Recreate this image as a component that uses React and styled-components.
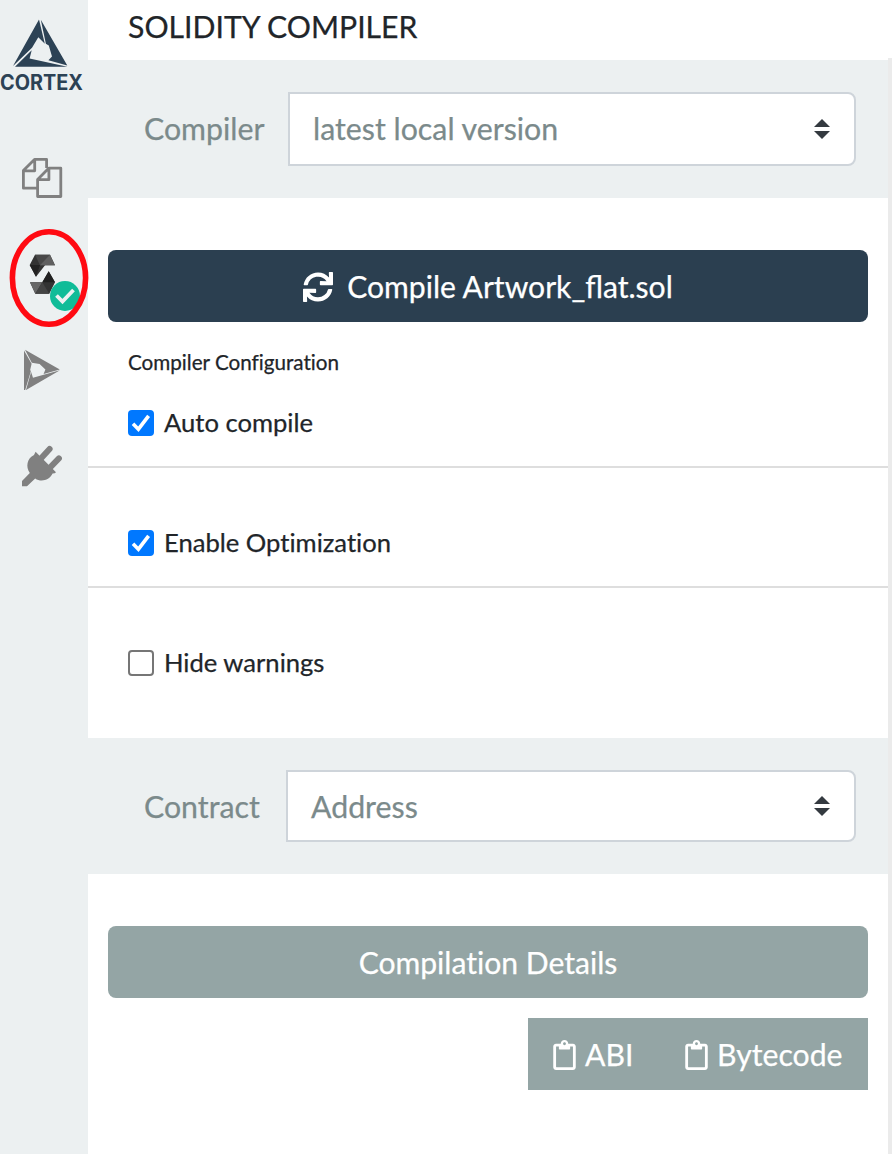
import React from "react";
import styled, { createGlobalStyle } from "styled-components";
import { FaSync, FaRegClipboard } from "react-icons/fa";

const GlobalStyle = createGlobalStyle`
  *, *::before, *::after { box-sizing: border-box; }
  body {
    margin: 0;
    background: #fff;
    color: #212529;
    font-family: Lato, "Liberation Sans", sans-serif;
    font-variant-ligatures: no-common-ligatures;
    -webkit-text-stroke: 0.25px currentColor;
    overflow: hidden;
  }
`;

const Shell = styled.div`
  display: flex;
  width: 892px;
  height: 1154px;
`;

const Sidebar = styled.nav`
  flex: none;
  width: 88px;
  background: #ecf0f1;
  display: flex;
  flex-direction: column;
  align-items: flex-start;

  svg { display: block; overflow: visible; }
`;

const Logo = styled.div`
  height: 157px;
  padding-top: 19px;
`;

const SideItem = styled.div`
  position: relative;
  width: 88px;
  height: ${(p) => p.$height}px;
  padding-left: ${(p) => p.$indent || 22}px;
  color: #808080;
`;

const Highlight = styled.svg`
  position: absolute;
  left: 9px;
  top: -25px;
  z-index: 2;
`;

const Badge = styled.span`
  position: absolute;
  left: 50px;
  top: 27px;
  width: 30px;
  height: 30px;
  border-radius: 50%;
  background: #0fbc98;
  display: grid;
  place-items: center;
`;

const Panel = styled.main`
  width: 800px;
  display: flex;
  flex-direction: column;
`;

const Edge = styled.div`
  width: 4px;
  margin-top: 58px;
  background: #ebebeb;
`;

const Title = styled.h1`
  margin: 0;
  height: 60px;
  padding: 8px 40px 0;
  font-size: 30.2px;
  line-height: 36px;
  font-weight: 400;
`;

const Field = styled.section`
  height: ${(p) => p.$height}px;
  padding: 32px 32px 32px 56px;
  display: flex;
  background: #ecf0f1;
  color: #7b8a8b;
  font-size: 30.3px;
  line-height: 36px;
`;

const FieldLabel = styled.label`
  flex: none;
  width: ${(p) => p.$width}px;
  display: flex;
  align-items: center;
  padding-bottom: ${(p) => p.$lift || 0}px;
`;

const SelectBox = styled.div`
  flex: 1;
  display: flex;
  align-items: center;
  justify-content: space-between;
  padding: 0 24px 0 ${(p) => p.$indent || 23}px;
  border: 2px solid #ced4da;
  border-radius: 0 8px 8px 0;
  background: #fff;
`;

const SelectValue = styled.span`
  padding-bottom: ${(p) => p.$lift || 0}px;
`;

const ActionArea = styled.div`
  padding: 52px 20px 0;
`;

const Button = styled.button`
  width: 100%;
  height: 72px;
  display: flex;
  align-items: center;
  justify-content: center;
  gap: 14px;
  padding: 0;
  border: 0;
  border-radius: 8px;
  background: ${(p) => (p.$primary ? "#2b3f50" : "#94a5a5")};
  color: #fff;
  font: 400 30.1px/36px Lato, "Liberation Sans", sans-serif;
  font-variant-ligatures: ${(p) => (p.$primary ? "normal" : "no-common-ligatures")};
  -webkit-text-stroke: inherit;

  svg { margin-top: 1px; }
`;

const Caption = styled.h2`
  margin: 0;
  height: 88px;
  padding: 27px 40px 0;
  font-size: 20.65px;
  line-height: 26px;
  font-weight: 400;
`;

const Option = styled.label`
  height: ${(p) => p.$height}px;
  display: flex;
  align-items: flex-start;
  gap: 10px;
  padding: 0 40px;
  font-size: 25.6px;
  line-height: 24px;
  border-bottom: ${(p) => (p.$divided ? "2px solid #dedede" : "0")};
  margin-bottom: ${(p) => (p.$divided ? 62 : 0)}px;
`;

const Check = styled.span`
  width: 26px;
  height: 26px;
  display: grid;
  place-items: center;
  border-radius: 4px;
  border: ${(p) => (p.$on ? "0" : "2px solid #767676")};
  background: ${(p) => (p.$on ? "#0078ff" : "#fff")};
`;

const CopyBar = styled.div`
  align-self: flex-end;
  display: flex;
  width: 340px;
  height: 72px;
  margin: 20px 20px 0 0;
  background: #94a5a5;
`;

const CopyButton = styled.button`
  width: ${(p) => p.$width}px;
  padding: 0 0 0 25px;
  display: flex;
  align-items: center;
  gap: 9px;
  border: 0;
  background: transparent;
  color: #fff;
  font: 400 30.2px/36px Lato, "Liberation Sans", sans-serif;
  -webkit-text-stroke: inherit;

  svg {
    width: 23px;
    height: 30px;
    margin-top: 1px;
  }
`;

function CortexLogo() {
  return (
    <svg width="88" height="76" viewBox="0 19 88 76">
      <g fill="#2c4255">
        <path d="M39 19.6 13 66 32 47.8 38.3 37.3 44.8 43.8Z" />
        <path d="M40.8 19.8 67.3 65.6 48.4 60.2 52 56.6 48.8 45.6 45.9 43.8Z" />
        <path d="M15 66.7 31.7 50.2 29.6 58.6 67.4 66.7Z" />
      </g>
      <text x="0" y="90" textLength="83" lengthAdjust="spacingAndGlyphs" fill="#2c4255" fontFamily="Inter, 'DejaVu Sans', sans-serif" fontWeight="700" fontSize="21">
        CORTEX
      </text>
    </svg>
  );
}

function FilesIcon() {
  return (
    <svg width="41" height="42" viewBox="22 157 41 42" fill="none" stroke="#808080" strokeWidth="2.8" strokeLinejoin="round">
      <path d="M37 188.2H23.4V170.6L34.5 159.4H46.6V168M23.4 170.8H34.7V159.4" />
      <path d="M48.7 168.2H60.8V196.5H37.6V179.5ZM37.6 179.7H48.9V168.2" />
    </svg>
  );
}

function SolidityIcon() {
  return (
    <svg width="27" height="41" viewBox="29 254 27 41">
      <path d="M29.7 265 35 254.7H50L55 265.3H45L36 276.7Z" fill="#333" />
      <path d="M35 254.7 40 265.3 45 265.3 50 254.7Z" fill="#484848" />
      <path d="M29.7 265H40L36 276.7Z" fill="#222" />
      <path d="M40 265.3 50 254.7 55 265.3Z" fill="#606060" />
      <path d="M48.7 271.3 55 282.3 49.3 293.7H35.3L30 282.3H42.3Z" fill="#333" />
      <path d="M30 282.3H42.3L35.3 293.7Z" fill="#666" />
      <path d="M35.3 293.7 42.3 282.3 49.3 293.7Z" fill="#444" />
      <path d="M48.7 271.3 55 282.3H42.3Z" fill="#202020" />
    </svg>
  );
}

function DeployIcon() {
  return (
    <svg width="37" height="42" viewBox="24 349 37 42" fill="#808080">
      <path d="M25 349.8 59.8 369.4 43.6 374 45.4 369.4 39.6 364 31.8 362.8Z" />
      <path d="M24 350.4 31.6 363.8 30.2 369.8 30.8 371.4 25.2 390H24Z" />
      <path d="M26 390 31.1 372 33 377.8 42.8 375 60 370.3Z" />
    </svg>
  );
}

function PlugIcon() {
  return (
    <svg width="41" height="42" viewBox="22 445 41 42">
      <g stroke="#808080" strokeLinecap="round" strokeWidth="6" fill="none">
        <path d="M49.6 449 40 459.6M58.9 458.4 49 468.6" />
      </g>
      <path fill="#808080" d="M35.6 451.8 56 472.2Q55.2 473.6 52.6 473.6C49.3 480.6 40.6 482.4 35.2 478.4L27 486.3H22V481L29.8 473C25.4 466.8 27 458.4 34 455Z" />
    </svg>
  );
}

function Caret() {
  return (
    <svg width="16" height="20" viewBox="0 0 16 20" fill="#343a40">
      <path d="M0 8 8 0 16 8ZM0 12 8 20 16 12Z" />
    </svg>
  );
}

function Checkbox({ checked }) {
  return (
    <Check $on={checked}>
      {checked && (
        <svg width="20" height="20" viewBox="0 0 20 20" fill="none" stroke="#fff" strokeWidth="3.6">
          <path d="M2 10.8 7.4 16.2 17.6 2.8" />
        </svg>
      )}
    </Check>
  );
}

export default function App() {
  return (
    <>
      <GlobalStyle />
      <Shell>
        <Sidebar>
          <Logo><CortexLogo /></Logo>
          <SideItem $height={97}><FilesIcon /></SideItem>
          <SideItem $height={95} $indent={29}>
            <SolidityIcon />
            <Badge>
              <svg width="20" height="16" viewBox="0 0 20 16" fill="none" stroke="#ecf0f1" strokeWidth="3.8">
                <path d="M1.5 7.5 7.5 13.5 18.5 2" />
              </svg>
            </Badge>
            <Highlight width="80" height="98" viewBox="0 0 80 98">
              <ellipse cx="40" cy="49" rx="36.6" ry="46.2" fill="none" stroke="#ff0a12" strokeWidth="5.6" />
            </Highlight>
          </SideItem>
          <SideItem $height={96} $indent={24}><DeployIcon /></SideItem>
          <SideItem $height={60}><PlugIcon /></SideItem>
        </Sidebar>
        <Panel>
          <Title>SOLIDITY COMPILER</Title>
          <Field $height={138}>
            <FieldLabel $width={144} $lift={2}>Compiler</FieldLabel>
            <SelectBox><SelectValue $lift={2}>latest local version</SelectValue><Caret /></SelectBox>
          </Field>
          <ActionArea>
            <Button $primary><FaSync size={30} />Compile Artwork_flat.sol</Button>
          </ActionArea>
          <Caption>Compiler Configuration</Caption>
          <Option $height={58} $divided><Checkbox checked />Auto compile</Option>
          <Option $height={58} $divided><Checkbox checked />Enable Optimization</Option>
          <Option $height={88}><Checkbox />Hide warnings</Option>
          <Field $height={136}>
            <FieldLabel $width={142}>Contract</FieldLabel>
            <SelectBox><SelectValue>Address</SelectValue><Caret /></SelectBox>
          </Field>
          <ActionArea>
            <Button>Compilation Details</Button>
          </ActionArea>
          <CopyBar>
            <CopyButton $width={132}><FaRegClipboard />ABI</CopyButton>
            <CopyButton $width={208}><FaRegClipboard />Bytecode</CopyButton>
          </CopyBar>
        </Panel>
        <Edge />
      </Shell>
    </>
  );
}
